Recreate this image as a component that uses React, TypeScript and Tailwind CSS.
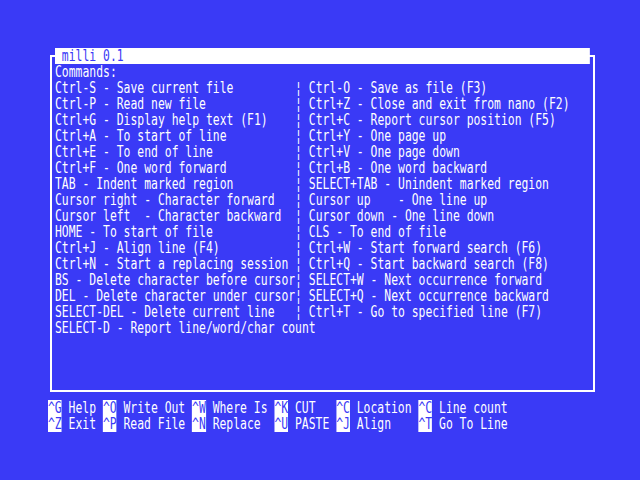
const pairs: [string, string | null][] = [
  ["Ctrl-S - Save current file", "Ctrl-O - Save as file (F3)"],
  ["Ctrl-P - Read new file", "Ctrl+Z - Close and exit from nano (F2)"],
  ["Ctrl+G - Display help text (F1)", "Ctrl+C - Report cursor position (F5)"],
  ["Ctrl+A - To start of line", "Ctrl+Y - One page up"],
  ["Ctrl+E - To end of line", "Ctrl+V - One page down"],
  ["Ctrl+F - One word forward", "Ctrl+B - One word backward"],
  ["TAB - Indent marked region", "SELECT+TAB - Unindent marked region"],
  ["Cursor right - Character forward", "Cursor up    - One line up"],
  ["Cursor left  - Character backward", "Cursor down - One line down"],
  ["HOME - To start of file", "CLS - To end of file"],
  ["Ctrl+J - Align line (F4)", "Ctrl+W - Start forward search (F6)"],
  ["Ctrl+N - Start a replacing session", "Ctrl+Q - Start backward search (F8)"],
  ["BS - Delete character before cursor", "SELECT+W - Next occurrence forward"],
  ["DEL - Delete character under cursor", "SELECT+Q - Next occurrence backward"],
  ["SELECT-DEL - Delete current line", "Ctrl+T - Go to specified line (F7)"],
  ["SELECT-D - Report line/word/char count", null],
];

const widths = ["w-[8ch]", "w-[13ch]", "w-[12ch]", "w-[9ch]", "w-[12ch]", "w-[14ch]"];

const menu: [string, string][][] = [
  [
    ["^G", "Help"],
    ["^O", "Write Out"],
    ["^W", "Where Is"],
    ["^K", "CUT"],
    ["^C", "Location"],
    ["^C", "Line count"],
  ],
  [
    ["^Z", "Exit"],
    ["^P", "Read File"],
    ["^N", "Replace"],
    ["^U", "PASTE"],
    ["^J", "Align"],
    ["^T", "Go To Line"],
  ],
];

function line(l: string, r: string | null) {
  if (r === null) return l;
  return l.padEnd(35, " ") + "\u00a6 " + r;
}

export default function App() {
  return (
    <div className="w-[640px] h-[480px] overflow-hidden bg-[#3a3af6] pt-[48px] pl-[48px] text-white font-['DejaVu_Sans_Mono',monospace] text-[16px] leading-4">
      <div className="ml-[2px] mt-[7px] w-[545px] h-[337px] border-2 border-white pl-[3px]">
        <div className="-mt-[9px] h-4 w-[78ch] whitespace-pre bg-white text-[#3a3af6] origin-left scale-x-[0.7122]">
          {" milli 0.1"}
        </div>
        <div className="h-4 whitespace-pre origin-left scale-x-[0.7122]">Commands:</div>
        {pairs.map(([l, r], i) => (
          <div key={i} className="h-4 whitespace-pre origin-left scale-x-[0.7122]">
            {line(l, r)}
          </div>
        ))}
      </div>
      <div className="mt-[8px]">
        {menu.map((row, i) => (
          <div key={i} className="h-4 w-[80ch] flex whitespace-pre origin-left scale-x-[0.7122]">
            {row.map(([k, label], j) => (
              <span key={j} className={"flex shrink-0 h-4 " + widths[j]}>
                <span className="block h-4 bg-white text-[#3a3af6]">{k}</span>
                <span className="block h-4">{" " + label}</span>
              </span>
            ))}
          </div>
        ))}
      </div>
    </div>
  );
}
